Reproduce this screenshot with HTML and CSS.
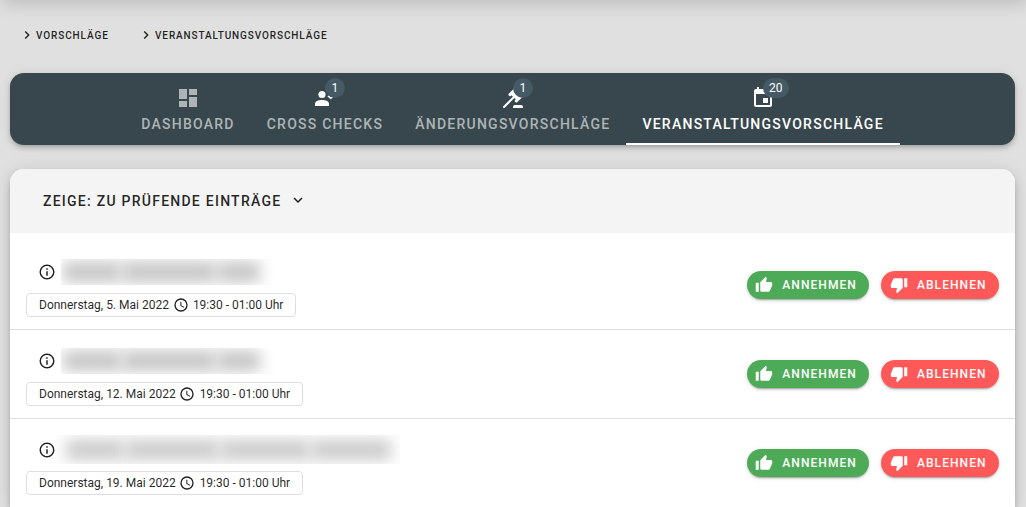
FILE: index.html
```html
<!DOCTYPE html>
<html lang="de">
<head>
<meta charset="utf-8">
<title>Veranstaltungsvorschläge</title>
<link rel="stylesheet" href="styles.css">
</head>
<body>
<svg class="defs" width="0" height="0">
  <symbol id="chev" viewBox="0 0 24 24"><path d="M8.59,16.58L13.17,12L8.59,7.41L10,6L16,12L10,18L8.59,16.58Z"/></symbol>
  <symbol id="down" viewBox="0 0 24 24"><path d="M7.41,8.58L12,13.17L16.59,8.58L18,10L12,16L6,10L7.41,8.58Z"/></symbol>
  <symbol id="info" viewBox="0 0 24 24"><path d="M11,9H13V7H11M12,20C7.59,20 4,16.41 4,12C4,7.59 7.59,4 12,4C16.41,4 20,7.59 20,12C20,16.41 16.41,20 12,20M12,2A10,10 0 0,0 2,12A10,10 0 0,0 12,22A10,10 0 0,0 22,12A10,10 0 0,0 12,2M11,17H13V11H11V17Z"/></symbol>
  <symbol id="clock" viewBox="0 0 24 24"><path d="M12,20A8,8 0 0,0 20,12A8,8 0 0,0 12,4A8,8 0 0,0 4,12A8,8 0 0,0 12,20M12,2A10,10 0 0,1 22,12A10,10 0 0,1 12,22C6.47,22 2,17.5 2,12A10,10 0 0,1 12,2M12.5,7V12.25L17,14.92L16.25,16.15L11,13V7H12.5Z"/></symbol>
  <symbol id="up" viewBox="0 0 24 24"><path d="M23,10C23,8.89 22.1,8 21,8H14.68L15.64,3.43C15.66,3.33 15.67,3.22 15.67,3.11C15.67,2.7 15.5,2.32 15.23,2.05L14.17,1L7.59,7.58C7.22,7.95 7,8.45 7,9V19A2,2 0 0,0 9,21H18C18.83,21 19.54,20.5 19.84,19.78L22.86,12.73C22.95,12.5 23,12.26 23,12V10M1,21H5V9H1V21Z"/></symbol>
  <symbol id="no" viewBox="0 0 24 24"><path d="M19,15H23V3H19M15,3H6C5.17,3 4.46,3.5 4.16,4.22L1.14,11.27C1.05,11.5 1,11.74 1,12V14A2,2 0 0,0 3,16H9.31L8.36,20.57C8.34,20.67 8.33,20.77 8.33,20.88C8.33,21.3 8.5,21.67 8.77,21.94L9.83,23L16.41,16.41C16.78,16.05 17,15.55 17,15V5C17,3.89 16.1,3 15,3Z"/></symbol>
</svg>
<div class="topshade"></div>
<nav class="crumbs">
  <a class="crumb"><svg><use href="#chev"/></svg>VORSCHLÄGE</a>
  <a class="crumb"><svg><use href="#chev"/></svg>VERANSTALTUNGSVORSCHLÄGE</a>
</nav>
<div class="tabs">
  <a class="tab"><span class="ico dim"><svg viewBox="0 0 24 24"><path d="M13,3V9H21V3M13,21H21V11H13M3,21H11V15H3M3,13H11V3H3V13Z"/></svg></span><span>DASHBOARD</span></a>
  <a class="tab"><span class="ico"><svg viewBox="0 0 24 24"><circle cx="9" cy="8.5" r="3.6"/><path d="M2 20V17.8C2 15.5 5.2 14 9 14S16 15.500 16 17.800V20Z"/><path d="M14.400 10.600L15.800 9.200L18 11.200L22 7L23.400 8.400L17.800 13.200Z"/></svg><b class="badge">1</b></span><span>CROSS CHECKS</span></a>
  <a class="tab"><span class="ico"><svg viewBox="0 0 24 24"><path d="M2.3,20.28L11.9,10.68L10.5,9.26L9.78,9.97C9.39,10.36 8.76,10.36 8.37,9.97L7.66,9.26C7.27,8.87 7.27,8.24 7.66,7.85L13.32,2.19C13.71,1.8 14.34,1.8 14.73,2.19L15.44,2.9C15.83,3.29 15.83,3.92 15.44,4.31L14.73,5L18.97,9.26L19.68,8.55C20.07,8.16 20.71,8.16 21.1,8.55L21.8,9.26C22.19,9.65 22.19,10.29 21.8,10.68L16.15,16.33C15.76,16.72 15.12,16.72 14.73,16.33L14,15.63C13.63,15.24 13.63,14.6 14,14.21L14.73,13.5L13.32,12.09L3.71,21.7C3.32,22.09 2.69,22.09 2.3,21.7C1.91,21.31 1.91,20.67 2.3,20.28M20,19A2,2 0 0,1 22,21V22H12V21A2,2 0 0,1 14,19H20Z"/></svg><b class="badge">1</b></span><span>ÄNDERUNGSVORSCHLÄGE</span></a>
  <a class="tab active"><span class="ico"><svg viewBox="0 0 24 24"><path d="M19,19H5V8H19M16,1V3H8V1H6V3H5C3.89,3 3,3.89 3,5V19A2,2 0 0,0 5,21H19A2,2 0 0,0 21,19V5C21,3.89 20.1,3 19,3H18V1M17,12H12V17H17V12Z"/></svg><b class="badge">20</b></span><span>VERANSTALTUNGSVORSCHLÄGE</span></a>
</div>
<main class="card">
  <header class="filter">ZEIGE: ZU PRÜFENDE EINTRÄGE<svg><use href="#down"/></svg></header>
  <div class="list">
    <div class="row">
      <div class="entry">
        <div class="title"><svg><use href="#info"/></svg><div class="redacted"><i class="w1"></i><i class="w2"></i><i class="w3"></i></div></div>
        <div class="chip">Donnerstag, 5. Mai 2022<svg><use href="#clock"/></svg>19:30 - 01:00 Uhr</div>
      </div>
      <button class="btn yes"><svg><use href="#up"/></svg>ANNEHMEN</button>
      <button class="btn nope"><svg><use href="#no"/></svg>ABLEHNEN</button>
    </div>
    <div class="row">
      <div class="entry">
        <div class="title"><svg><use href="#info"/></svg><div class="redacted"><i class="w1"></i><i class="w2"></i><i class="w3"></i></div></div>
        <div class="chip">Donnerstag, 12. Mai 2022<svg><use href="#clock"/></svg>19:30 - 01:00 Uhr</div>
      </div>
      <button class="btn yes"><svg><use href="#up"/></svg>ANNEHMEN</button>
      <button class="btn nope"><svg><use href="#no"/></svg>ABLEHNEN</button>
    </div>
    <div class="row">
      <div class="entry">
        <div class="title"><svg><use href="#info"/></svg><div class="redacted long"><i class="w1"></i><i class="w2"></i><i class="w4"></i><i class="w5"></i></div></div>
        <div class="chip">Donnerstag, 19. Mai 2022<svg><use href="#clock"/></svg>19:30 - 01:00 Uhr</div>
      </div>
      <button class="btn yes"><svg><use href="#up"/></svg>ANNEHMEN</button>
      <button class="btn nope"><svg><use href="#no"/></svg>ABLEHNEN</button>
    </div>
  </div>
</main>
</body>
</html>
```
FILE: styles.css
```css
* { box-sizing: border-box; }
html, body { height: 507px; overflow: hidden; }
body { margin: 0; padding: 0 11px 0 10px; display: flex; flex-direction: column; background: #e0e0e0; font-family: Roboto, "Liberation Sans", sans-serif; color: rgba(0,0,0,.87); }
svg { fill: currentColor; flex: none; display: block; }
.defs { position: absolute; }
.topshade { position: absolute; top: -20px; left: 4px; right: 0; height: 18px; box-shadow: 0 4px 18px 2px rgba(0,0,0,.16); }
.crumbs { flex: none; height: 73px; padding: 2px 0 5px 9px; display: flex; align-items: center; gap: 29.3px; }
.crumb { display: flex; align-items: center; font-size: 10px; font-weight: 500; letter-spacing: .893px; }
.crumb svg { width: 16px; height: 16px; margin-right: 1px; }
.tabs { flex: none; height: 72px; border-radius: 14px; background: #37474d; display: flex; justify-content: center; box-shadow: 0 2px 4px -1px rgba(0,0,0,.2), 0 4px 5px rgba(0,0,0,.08), 0 1px 12px rgba(0,0,0,.1); }
.tab { padding: 13px 16px 0; display: flex; flex-direction: column; align-items: center; font-size: 14px; line-height: 16px; font-weight: 500; letter-spacing: 1.25px; color: rgba(255,255,255,.6); }
.tab.active { color: #fff; border-bottom: 2px solid #fff; }
.ico { position: relative; width: 24px; height: 24px; margin-bottom: 6px; color: #fff; }
.ico.dim { color: rgba(255,255,255,.6); }
.ico svg { width: 24px; height: 24px; }
.badge { position: absolute; left: 12px; top: -8px; height: 20px; min-width: 20px; padding: 4px 6px; border-radius: 10px; background: #455a64; color: #fff; font-size: 12px; line-height: 12px; font-weight: 400; letter-spacing: 0; text-align: center; }
.card { flex: 1; min-height: 0; margin-top: 24px; border-radius: 14px 14px 0 0; background: #fff; overflow: hidden; box-shadow: 0 3px 5px -1px rgba(0,0,0,.16), 0 6px 10px rgba(0,0,0,.12), 0 1px 18px rgba(0,0,0,.1); }
.filter { height: 64px; padding-left: 33px; background: #f4f4f4; display: flex; align-items: center; font-size: 14px; font-weight: 500; letter-spacing: 1.25px; }
.filter svg { width: 18px; height: 18px; margin: 0 0 2px 8px; }
.list { padding-top: 8px; }
.row { height: 89px; padding: 0 16px; display: flex; align-items: center; border-bottom: 1px solid #dedede; }
.entry { flex: 1; }
.title { height: 36px; padding-left: 12px; display: flex; align-items: center; }
.title svg { width: 18px; height: 18px; margin-top: 1px; }
.redacted { width: 230px; height: 26px; margin: 1px 0 0 5px; overflow: hidden; display: flex; align-items: center; gap: 1px; padding-left: 2px; }
.redacted i { height: 20px; background: #c4c4c4; filter: blur(7.5px); }
.w1 { width: 58px; }
.w2 { width: 94px; }
.w3 { width: 43px; }
.w4 { width: 90px; }
.w5 { width: 80px; }
.redacted.long { width: 344px; height: 29px; margin-left: 0; padding-left: 10px; }
.redacted.long i { background: #cacaca; }
.chip { width: max-content; height: 24px; margin-top: 4px; padding: 0 12px; display: flex; align-items: center; border: 1px solid #dedede; border-radius: 4px; font-size: 12px; }
.chip svg { width: 16px; height: 16px; margin: 0 4.3px 0 3.7px; }
.btn { height: 28px; margin: 0 0 0 12px; padding: 0 12.4px 0 8px; border: 0; border-radius: 14px; display: flex; align-items: center; color: #fff; font: 500 12px Roboto, sans-serif; letter-spacing: 1.07px; box-shadow: 0 3px 1px -2px rgba(0,0,0,.2), 0 2px 2px rgba(0,0,0,.1), 0 1px 5px rgba(0,0,0,.1); }
.btn svg { width: 18px; height: 18px; margin: 0 9.6px 1px 0; }
.nope svg { margin: 0 8.9px 0 .7px; }
.yes { background: #4dab58; }
.nope { background: #ff5858; }
```
